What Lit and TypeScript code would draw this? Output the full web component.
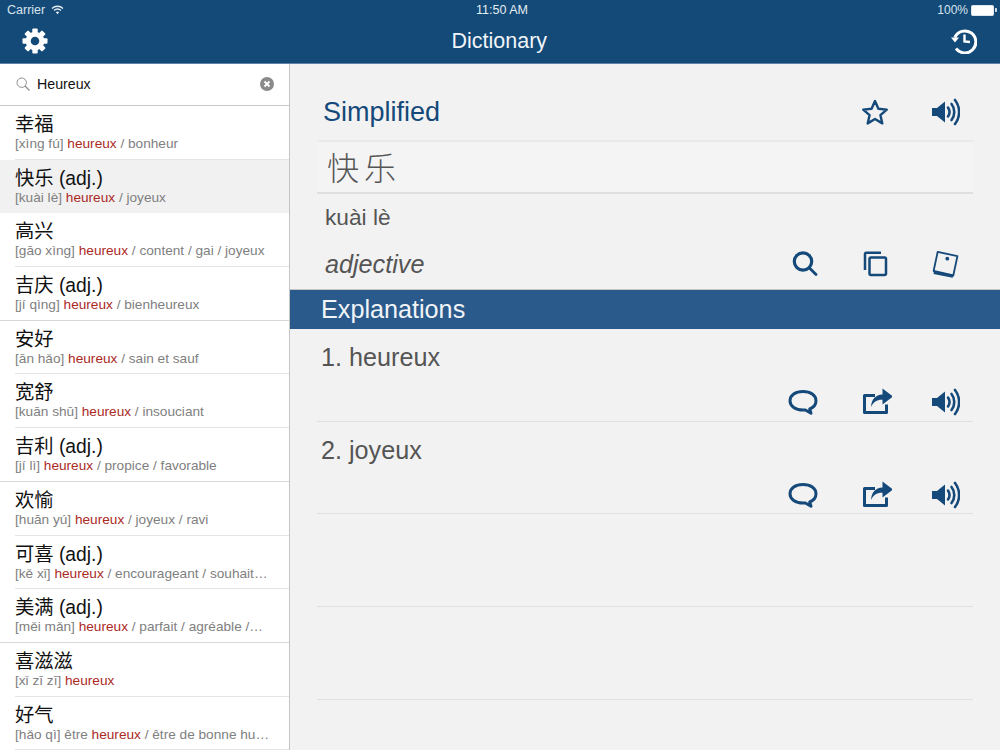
import { LitElement, html, css, svg } from "lit";
import { customElement } from "lit/decorators.js";

const rows: { zh: string; adj?: boolean; py: string; pre?: string; post: string; sel?: boolean; heavy?: boolean }[] = [
  { zh: "幸福", py: "[xìng fú]", post: " / bonheur" },
  { zh: "快乐", adj: true, py: "[kuài lè]", post: " / joyeux", sel: true },
  { zh: "高兴", py: "[gāo xìng]", post: " / content / gai / joyeux" },
  { zh: "吉庆", adj: true, py: "[jí qìng]", post: " / bienheureux", heavy: true },
  { zh: "安好", py: "[ān hǎo]", post: " / sain et sauf" },
  { zh: "宽舒", py: "[kuān shū]", post: " / insouciant" },
  { zh: "吉利", adj: true, py: "[jí lì]", post: " / propice / favorable", heavy: true },
  { zh: "欢愉", py: "[huān yú]", post: " / joyeux / ravi" },
  { zh: "可喜", adj: true, py: "[kě xǐ]", post: " / encourageant / souhait…" },
  { zh: "美满", adj: true, py: "[měi mǎn]", post: " / parfait / agréable /…", heavy: true },
  { zh: "喜滋滋", py: "[xǐ zī zī]", post: "" },
  { zh: "好气", py: "[hǎo qì]", pre: " être", post: " / être de bonne hu…" },
];

const speaker = html`<svg class="ic" viewBox="0 0 30 30"><path fill="#14497a" d="M2 11h5l8-6.500v21L7 19H2z"/><g fill="none" stroke="#14497a" stroke-width="2.600" stroke-linecap="round"><path d="M18 10.500c1.800 2.600 1.800 6.400 0 9"/><path d="M21.500 7c3.700 4.500 3.700 11.500 0 16"/><path d="M25 3c5.500 7 5.500 17 0 24"/></g></svg>`;
const bubble = html`<svg class="ic" viewBox="0 0 30 30"><path fill="none" stroke="#14497a" stroke-width="3" stroke-linejoin="round" d="M15 4.500c7.500 0 13 3.700 13 9.300 0 3.900-2.700 6.800-6.300 8.200l1.300 4.200-5.600-3.200c-.8.100-1.600.1-2.400.1C7.500 23.100 2 19.400 2 13.800S7.500 4.500 15 4.500z"/></svg>`;
const share = html`<svg class="ic" viewBox="0 0 30 30"><path fill="none" stroke="#14497a" stroke-width="3" stroke-linejoin="round" d="M13 8.500H2.500v17h22v-8"/><path fill="#14497a" d="M20.500 1.500 31 9.500l-10.500 8v-4.700c-5.500-.2-9 1.900-11.500 7.200.4-7.800 4.300-12.100 11.500-12.600z"/></svg>`;
const star = html`<svg class="ic" viewBox="0 0 30 30"><path fill="none" stroke="#14497a" stroke-width="2.400" stroke-linejoin="round" d="M15 4l3.400 7.800 8.400.8-6.400 5.500 1.900 8.300-7.300-4.400-7.300 4.400 1.900-8.300-6.400-5.500 8.400-.8z"/></svg>`;
const searchIc = html`<svg class="ic" viewBox="0 0 30 30"><circle cx="13" cy="12.500" r="8.700" fill="none" stroke="#14497a" stroke-width="3.200"/><path stroke="#14497a" stroke-width="2.800" stroke-linecap="round" d="M19.500 19l6.500 6.500"/></svg>`;
const copy = html`<svg class="ic" viewBox="0 0 30 30"><path fill="none" stroke="#14497a" stroke-width="2.500" d="M5 21V5c0-.8.500-1.300 1.300-1.300H21"/><rect x="9.500" y="8.500" width="16.500" height="17.500" rx="1.500" fill="none" stroke="#14497a" stroke-width="2.500"/></svg>`;
const card = html`<svg class="ic" viewBox="0 0 30 30"><path fill="none" stroke="#14497a" stroke-width="1.800" stroke-linejoin="round" d="M7.700 2.800 27.400 7.200 23.300 26.500 3.600 22z"/><path stroke="#14497a" stroke-width="3" d="M3.800 23.500 23 27.300"/><circle cx="17.300" cy="9.700" r="1.900" fill="#14497a"/></svg>`;

const teeth = [0, 45, 90, 135, 180, 225, 270, 315];

@customElement("app-root")
export class AppRoot extends LitElement {
  static styles = css`
    :host { display: flex; flex-direction: column; width: 1000px; height: 750px; overflow: hidden; background: #f2f2f2; font-family: "Liberation Sans", "Noto Sans CJK SC", sans-serif; }
    .head { background: #134a78; height: 63px; flex: none; display: flex; flex-direction: column; color: #fff; border-bottom: 1px solid #5d83a6; }
    .status { height: 20px; display: grid; grid-template-columns: 1fr 1fr 1fr; align-items: center; padding: 0 3px 0 7px; font-size: 12.500px; color: #d9e3ec; }
    .status .l { display: flex; align-items: center; gap: 6px; }
    .status .c { text-align: center; color: #e6edf3; }
    .status .r { display: flex; justify-content: flex-end; align-items: center; gap: 3px; font-size: 12px; }
    .batt { display: flex; align-items: center; }
    .batt i { display: block; width: 21px; height: 9px; background: #fff; border-radius: 1.500px; border: .5px solid #dfe7ee; }
    .batt b { display: block; width: 2px; height: 4px; background: #cfdae4; margin-left: 1px; border-radius: 0 1px 1px 0; }
    .nav { flex: 1; display: flex; align-items: center; justify-content: space-between; padding: 0 23px 2px 21.500px; }
    .nav .t { font-size: 21.500px; color: #f2f5f8; margin-top: 2px; }
    .nav svg { display: block; width: 26px; height: 26px; }
    .body { flex: 1; min-height: 0; display: flex; }
    .side { width: 289px; flex: none; background: #fff; border-right: 1px solid #c4c4c4; display: flex; flex-direction: column; }
    .search { flex: none; box-sizing: content-box; display: flex; align-items: center; padding: 0 15px 1px 16px; height: 40px; border-bottom: 1px solid #c9c9c9; font-size: 14.200px; color: #111; }
    .search svg.s { width: 14px; height: 14px; margin-right: 7px; }
    .search span { flex: 1; }
    .search svg.x { width: 14px; height: 14px; }
    .row { height: 53.700px; box-sizing: border-box; flex: none; padding: 7px 0 0 15px; position: relative; overflow: hidden; }
    .row::after { content: ""; position: absolute; left: 15px; right: 0; bottom: 0; height: 1px; background: #e4e4e4; }
    .row.heavy::after { left: 0; background: #d8d8d8; }
    .row.sel { background: #f1f1f1; }
    .row.sel::after { display: none; }
    .zh { font-size: 19.300px; line-height: 23px; color: #111; white-space: nowrap; }
    .sub { font-size: 13.650px; line-height: 17px; margin-top: -1px; color: #808080; white-space: nowrap; }
    .sub em { font-style: normal; color: #ab2a25; }
    .main { flex: 1; min-width: 0; display: flex; flex-direction: column; }
    .ic { display: block; width: 30px; height: 30px; flex: none; }
    .sec { margin: 0 27px; display: flex; align-items: center; flex: none; }
    .sec .grow { flex: 1; }
    .icons { display: flex; gap: 40px; margin-right: 13px; align-items: center; }
    .title { height: 78px; border-bottom: 2px solid #e9e9e9; box-sizing: border-box; font-size: 27px; color: #14497a; padding: 20px 0 0 6px; }
    .word { height: 52px; box-sizing: border-box; background: #f4f4f4; border-bottom: 2px solid #dedede; font-size: 32px; letter-spacing: 5px; color: #555; padding: 0 0 2px 10px; font-family: "Noto Sans CJK SC", sans-serif; font-weight: 300; }
    .py { height: 47px; font-size: 22.700px; color: #555; padding: 0 0 0 8px; }
    .pos { height: 48px; box-sizing: border-box; font-size: 25.200px; font-style: italic; color: #555; padding: 0 0 2px 8px; }
    .bar { height: 39px; flex: none; background: #2a5a8b; border-top: 1px solid #c6c6c6; color: #f1f4f7; font-size: 25.200px; display: flex; align-items: center; padding-left: 31px; }
    .ex { height: 92.700px; box-sizing: border-box; margin: 0 27px; border-bottom: 1px solid #e0e0e0; flex: none; display: flex; flex-direction: column; }
    .ex .txt { font-size: 25.200px; color: #555; padding: 13px 0 0 4px; line-height: 30px; }
    .ex .icons { justify-content: flex-end; margin-top: 15px; gap: 38px; }
    .ex .icons .first { margin-right: 6px; }
  `;

  private actions() {
    return html`<div class="icons"><span class="first">${bubble}</span>${share}${speaker}</div>`;
  }

  render() {
    return html`
      <div class="head">
        <div class="status">
          <div class="l">Carrier
            <svg width="13" height="10" viewBox="0 0 13 10"><g fill="none" stroke="#e6edf3" stroke-width="1.300"><path d="M1 3.500c3-3 8-3 11 0"/><path d="M3 5.500c2-2 5-2 7 0"/></g><path fill="#e6edf3" d="M4.800 7.200c1-1 2.400-1 3.400 0L6.500 9.200z"/></svg>
          </div>
          <div class="c">11:50 AM</div>
          <div class="r">100% <span class="batt"><i></i><b></b></span></div>
        </div>
        <div class="nav">
          <svg viewBox="0 0 26 26"><g fill="#fff">${teeth.map((a) => svg`<rect x="10.300" y="0.500" width="5.400" height="6" rx="1" transform="rotate(${a} 13 13)"/>`)}</g><circle cx="13" cy="13" r="6.800" fill="none" stroke="#fff" stroke-width="5"/></svg>
          <div class="t">Dictionary</div>
          <svg viewBox="0 0 26 26"><path fill="none" stroke="#fff" stroke-width="3" d="M3.800 9.500A11 11 0 1 1 5 20.500"/><path fill="#fff" d="M0 9.500h8l-4 5z"/><path fill="none" stroke="#fff" stroke-width="2.400" d="M13.500 6.500v7l5.500.5"/></svg>
        </div>
      </div>
      <div class="body">
        <div class="side">
          <div class="search">
            <svg class="s" viewBox="0 0 14 14"><circle cx="5.700" cy="5.700" r="4.700" fill="none" stroke="#8e8e8e" stroke-width="1"/><path stroke="#8e8e8e" stroke-width="1.200" d="M9 9l4.500 4.500"/></svg>
            <span>Heureux</span>
            <svg class="x" viewBox="0 0 14 14"><circle cx="7" cy="7" r="7" fill="#8a8a8a"/><path stroke="#fff" stroke-width="1.800" d="M4.500 4.500l5 5M9.500 4.500l-5 5"/></svg>
          </div>
          ${rows.map(
            (r) => html`<div class="row ${r.sel ? "sel" : ""} ${r.heavy ? "heavy" : ""}">
              <div class="zh">${r.zh}${r.adj ? " (adj.)" : ""}</div>
              <div class="sub">${r.py}${r.pre ?? ""} <em>heureux</em>${r.post}</div>
            </div>`
          )}
        </div>
        <div class="main">
          <div class="sec title"><span class="grow">Simplified</span><div class="icons">${star}${speaker}</div></div>
          <div class="sec word">快乐</div>
          <div class="sec py">kuài lè</div>
          <div class="sec pos"><span class="grow">adjective</span><div class="icons">${searchIc}${copy}${card}</div></div>
          <div class="bar">Explanations</div>
          <div class="ex"><div class="txt">1. heureux</div>${this.actions()}</div>
          <div class="ex"><div class="txt">2. joyeux</div>${this.actions()}</div>
          <div class="ex"></div>
          <div class="ex"></div>
        </div>
      </div>
    `;
  }
}
